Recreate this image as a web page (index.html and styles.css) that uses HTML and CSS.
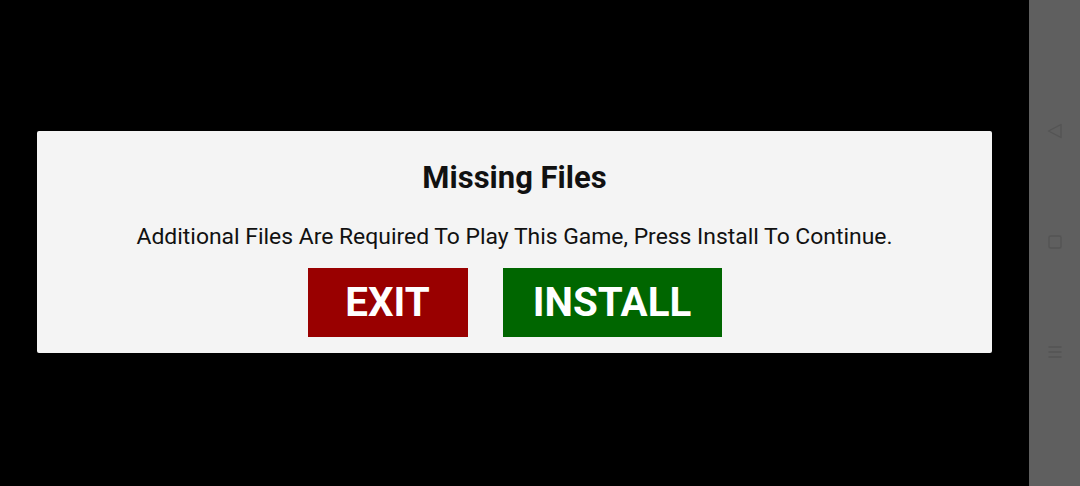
FILE: index.html
```html
<!DOCTYPE html>
<html>
<head>
<meta charset="utf-8">
<link rel="stylesheet" href="styles.css">
</head>
<body>
<div class="screen">
  <main class="stage">
    <section class="dialog">
      <h1 class="title">Missing Files</h1>
      <p class="message">Additional Files Are Required To Play This Game, Press Install To Continue.</p>
      <div class="actions">
        <button class="btn btn-exit">EXIT</button>
        <button class="btn btn-install">INSTALL</button>
      </div>
    </section>
  </main>
  <nav class="navbar">
    <svg class="nav-icon" width="16" height="16" viewBox="0 0 16 16"><path d="M14 1.5 L1.5 8 L14 14.5 Z" fill="none" stroke="#545454" stroke-width="1.4" stroke-linejoin="round"/></svg>
    <svg class="nav-icon" width="16" height="16" viewBox="0 0 16 16"><rect x="2" y="2" width="12" height="12" rx="1.5" fill="none" stroke="#545454" stroke-width="1.4"/></svg>
    <svg class="nav-icon" width="16" height="16" viewBox="0 0 16 16"><path d="M1.5 3 H14.5 M1.5 8 H14.5 M1.5 13 H14.5" stroke="#545454" stroke-width="1.3"/></svg>
  </nav>
</div>
</body>
</html>
```

FILE: styles.css
```css
html, body {
  margin: 0;
  padding: 0;
  background: #000;
  width: 1080px;
  height: 486px;
  overflow: hidden;
}

.screen {
  display: flex;
  width: 1080px;
  height: 486px;
}

.stage {
  flex: 1;
  display: flex;
  align-items: center;
  justify-content: center;
  padding: 0 37px 2px;
}

.dialog {
  flex: 1;
  height: 222px;
  box-sizing: border-box;
  background: #f4f4f4;
  border-radius: 2px;
  padding: 29px 0 16px;
  display: flex;
  flex-direction: column;
  align-items: center;
  font-family: Roboto, "Liberation Sans", sans-serif;
  color: #111;
}

.title {
  margin: 0;
  font-size: 31px;
  font-weight: 700;
  line-height: 36px;
}

.message {
  margin: 27px 0 0;
  font-size: 22.9px;
  font-weight: 400;
  line-height: 28px;
}

.actions {
  margin-top: auto;
  display: flex;
  gap: 35px;
}

.btn {
  border: none;
  height: 69px;
  padding: 0;
  color: #fff;
  font-family: Roboto, "Liberation Sans", sans-serif;
  font-weight: 700;
  font-size: 40.3px;
  border-radius: 0;
}

.btn-exit {
  width: 160px;
  background: #990000;
}

.btn-install {
  width: 219px;
  background: #006600;
}

.navbar {
  width: 51px;
  background: #5f5f5f;
  display: flex;
  flex-direction: column;
  align-items: center;
  justify-content: space-between;
  padding: 123px 0 126px;
  box-sizing: border-box;
}

.nav-icon {
  display: block;
}
```
